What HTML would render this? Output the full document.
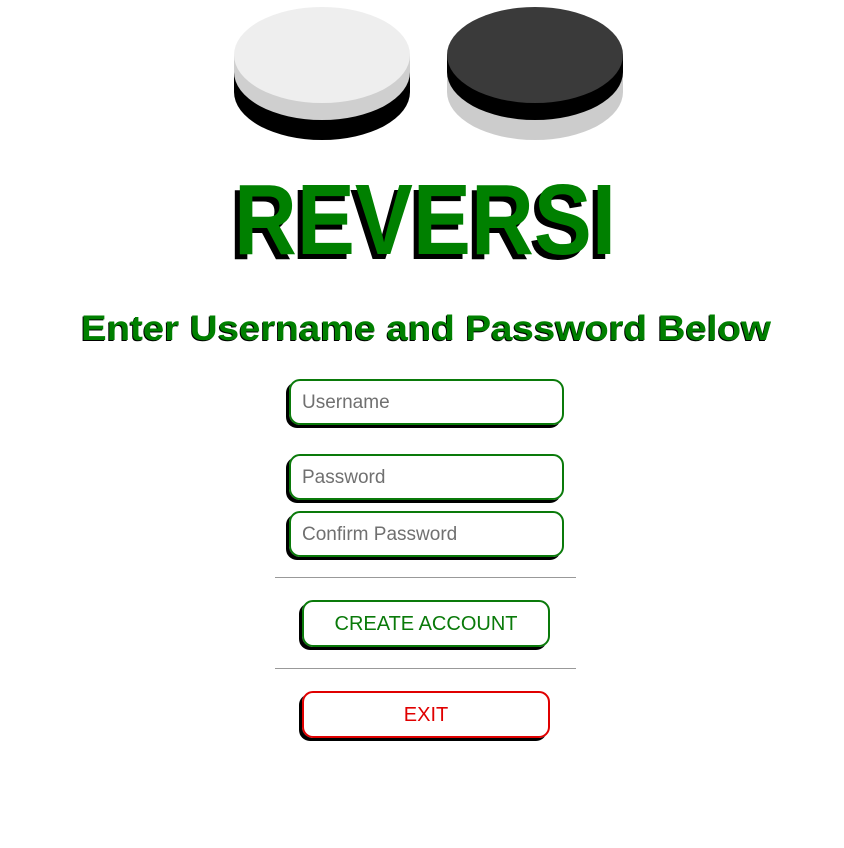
<!DOCTYPE html>
<html><head><style>
body{margin:0;width:844px;height:848px;background:#fff;position:relative;font-family:"Liberation Sans",sans-serif;overflow:hidden}
.in{position:absolute;left:289px;height:42px;border:2px solid #0a7a0a;border-radius:11px;box-shadow:-3px 3px 0 #000;box-sizing:content-box;width:271px}
.in span{position:absolute;left:11px;top:11px;font-size:19px;color:#707070}
.hr{position:absolute;left:275px;width:301px;height:1px;background:#999}
.btn{position:absolute;left:302px;width:244px;height:43px;border:2px solid;border-radius:11px;box-shadow:-3px 3px 0 #000;text-align:center;line-height:44px;font-size:20px}
</style></head><body>
<svg width="844" height="290" style="position:absolute;left:0;top:0">
<ellipse cx="322" cy="92" rx="88" ry="48" fill="#000"/>
<rect x="234" y="72" width="176" height="20" fill="#000"/>
<ellipse cx="322" cy="72" rx="88" ry="48" fill="#cfcfcf"/>
<rect x="234" y="55" width="176" height="17" fill="#cfcfcf"/>
<ellipse cx="322" cy="55" rx="88" ry="48" fill="#eeeeee"/>
<ellipse cx="535" cy="92" rx="88" ry="48" fill="#cccccc"/>
<rect x="447" y="72" width="176" height="20" fill="#ccc"/>
<ellipse cx="535" cy="72" rx="88" ry="48" fill="#000"/>
<rect x="447" y="55" width="176" height="17" fill="#000"/>
<ellipse cx="535" cy="55" rx="88" ry="48" fill="#3a3a3a"/>
<text x="229" y="259" textLength="382" lengthAdjust="spacingAndGlyphs" font-family="Liberation Sans" font-weight="bold" font-size="100" fill="#000">REVERSI</text>
<text x="234" y="254" textLength="382" lengthAdjust="spacingAndGlyphs" font-family="Liberation Sans" font-weight="bold" font-size="100" fill="#008000">REVERSI</text>
</svg>
<svg width="844" height="60" style="position:absolute;left:0;top:300px">
<text x="80" y="41" textLength="690" lengthAdjust="spacingAndGlyphs" font-family="Liberation Sans" font-weight="bold" font-size="35" fill="#000">Enter Username and Password Below</text>
<text x="81" y="40" textLength="690" lengthAdjust="spacingAndGlyphs" font-family="Liberation Sans" font-weight="bold" font-size="35" fill="#008000">Enter Username and Password Below</text>
</svg>
<div class="in" style="top:379px"><span>Username</span></div>
<div class="in" style="top:454px"><span>Password</span></div>
<div class="in" style="top:511px"><span>Confirm Password</span></div>
<div class="hr" style="top:577px"></div>
<div class="btn" style="top:600px;border-color:#0a7a0a;color:#0a7a0a">CREATE ACCOUNT</div>
<div class="hr" style="top:668px"></div>
<div class="btn" style="top:691px;border-color:#e00000;color:#e00000">EXIT</div>
</body></html>
